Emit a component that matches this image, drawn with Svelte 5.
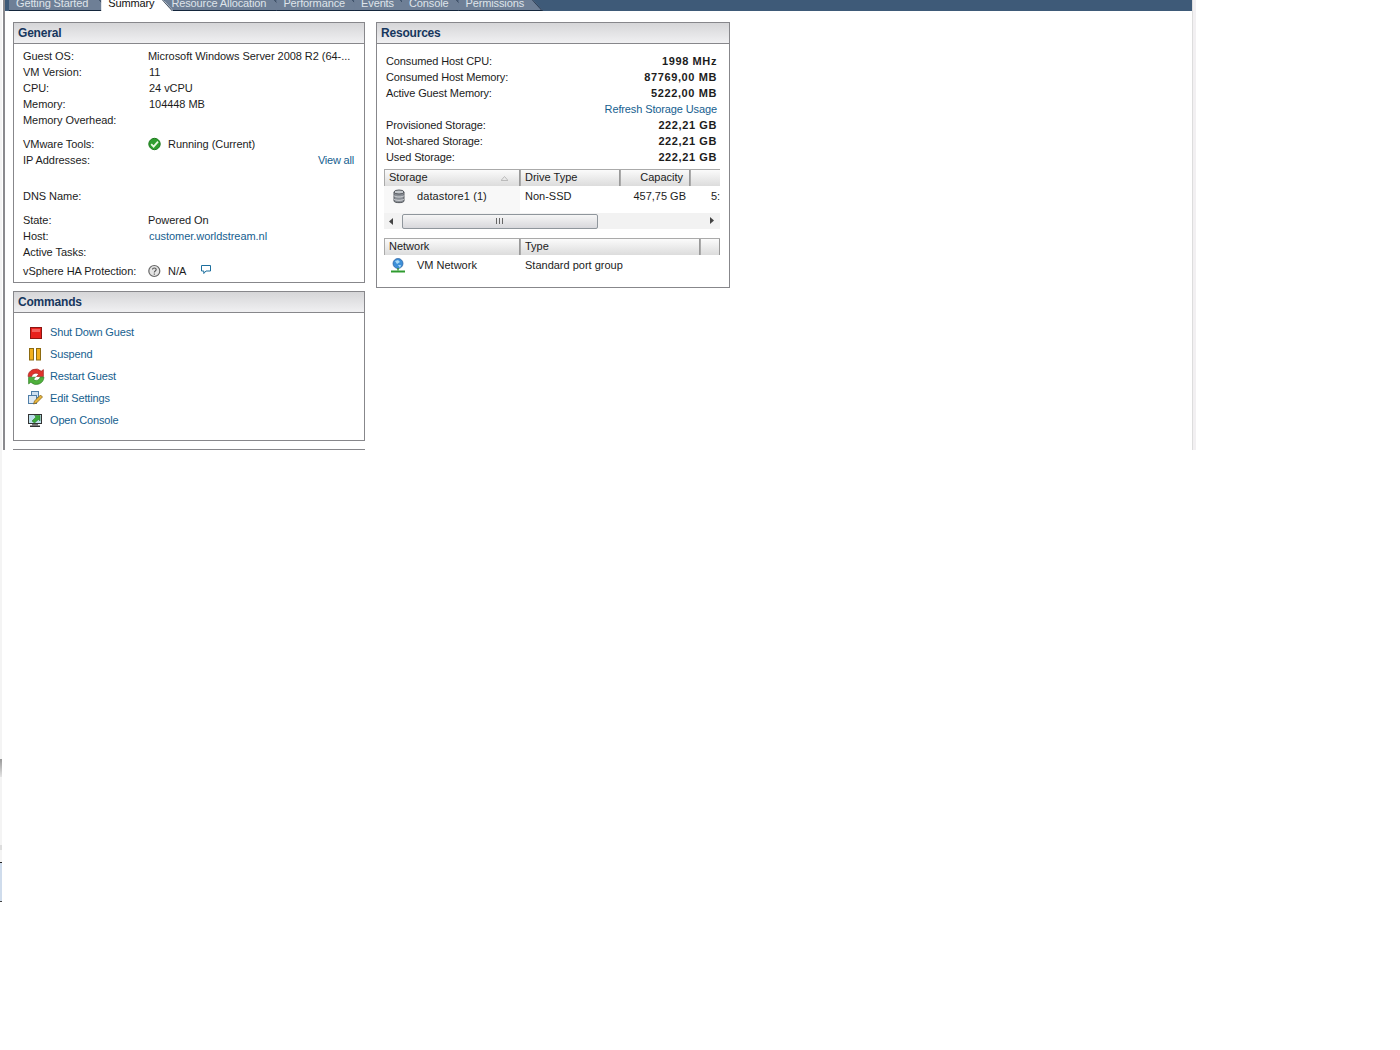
<script lang="ts">
  const tabs = ["Getting Started", "Summary", "Resource Allocation", "Performance", "Events", "Console", "Permissions"];

  const general1 = [
    ["Guest OS:", "Microsoft Windows Server 2008 R2 (64-..."],
    ["VM Version:", "11"],
    ["CPU:", "24 vCPU"],
    ["Memory:", "104448 MB"],
    ["Memory Overhead:", ""],
  ];

  const usage = [
    ["Consumed Host CPU:", "1998 MHz"],
    ["Consumed Host Memory:", "87769,00 MB"],
    ["Active Guest Memory:", "5222,00 MB"],
  ];
  const storage = [
    ["Provisioned Storage:", "222,21 GB"],
    ["Not-shared Storage:", "222,21 GB"],
    ["Used Storage:", "222,21 GB"],
  ];
  const commands = ["Shut Down Guest", "Suspend", "Restart Guest", "Edit Settings", "Open Console"];
</script>

<div class="page">
  <div class="edge-marks">
    <span class="mark one"></span>
    <span class="mark two"></span>
    <span class="mark three"></span>
  </div>
  <div class="window">
    <div class="tabbar">
      {#each tabs as tab, i}
        <div class="tab" class:active={i === 1}>{tab}</div>
      {/each}
    </div>
    <div class="columns">
      <div class="col-left">
        <section class="panel general">
          <h2>General</h2>
          <div class="body">
            {#each general1 as row, i}
              <div class="row"><span class="label">{row[0]}</span><span class="value" class:nudge={i > 0}>{row[1]}</span></div>
            {/each}
            <div class="row gap8">
              <span class="label">VMware Tools:</span>
              <span class="value withicon">
                <svg width="14" height="14" viewBox="0 0 14 14">
                  <circle cx="6.5" cy="7" r="5.7" fill="#2f9e2f" stroke="#1d7a1d" />
                  <path d="M3.2 7.2l2.4 2.5 4.4-5" fill="none" stroke="#e8f8e0" stroke-width="1.8" />
                </svg>
                Running (Current)
              </span>
            </div>
            <div class="row ip">
              <span class="label">IP Addresses:</span>
              <a class="viewall">View all</a>
            </div>
            <div class="row dns"><span class="label">DNS Name:</span></div>
            <div class="row gap8"><span class="label">State:</span><span class="value">Powered On</span></div>
            <div class="row"><span class="label">Host:</span><a class="value link nudge">customer.worldstream.nl</a></div>
            <div class="row"><span class="label">Active Tasks:</span></div>
            <div class="row ha">
              <span class="label">vSphere HA Protection:</span>
              <span class="value withicon">
                <svg width="14" height="14" viewBox="0 0 14 14">
                  <circle cx="6.3" cy="7" r="5.5" fill="#e4e4e4" stroke="#666" stroke-width="1.2" />
                  <path d="M4.5 5.6c0-2.2 3.7-2.2 3.7 0 0 1.4-1.9 1.4-1.9 2.8M6.3 9.4v1.4" fill="none" stroke="#555" stroke-width="1.1" />
                </svg>
                N/A
                <svg class="balloon" width="12" height="11" viewBox="0 0 12 11">
                  <path d="M1.5 1.5h9v5.5H6L3.8 9.5V7H1.5z" fill="none" stroke="#1d6f9e" />
                </svg>
              </span>
            </div>
          </div>
        </section>

        <section class="panel commands">
          <h2>Commands</h2>
          <div class="cmd-body">
            {#each commands as cmd, i}
              <div class="cmd">
                <span class="cmd-icon">
                  {#if i === 0}
                    <svg width="16" height="16" viewBox="0 0 16 16">
                      <rect x="3.5" y="3.5" width="11" height="11" fill="#e8201c" stroke="#8c1512" />
                      <rect x="5" y="5" width="8" height="3" fill="#f4605c" />
                    </svg>
                  {:else if i === 1}
                    <svg width="16" height="16" viewBox="0 0 16 16">
                      <rect x="2.5" y="2.5" width="4" height="11.5" fill="#f2b01e" stroke="#8c6a10" />
                      <rect x="9.5" y="2.5" width="4" height="11.5" fill="#f2b01e" stroke="#8c6a10" />
                    </svg>
                  {:else if i === 2}
                    <svg width="18" height="17" viewBox="0 0 17 16">
                      <path d="M1 8a7.3 7.3 0 0 1 12.4-5L15.5 1.5V8H9l2-2A4 4 0 0 0 4.4 8z" fill="#e0332c" stroke="#9c1f1a" stroke-width=".6" />
                      <path d="M16 8.5a7.3 7.3 0 0 1-12.4 5L1.5 15V8.7H8l-2 2a4 4 0 0 0 6.6-2.2z" fill="#4fb03c" stroke="#2a7a20" stroke-width=".6" />
                    </svg>
                  {:else if i === 3}
                    <svg width="16" height="16" viewBox="0 0 16 16">
                      <rect x="4.5" y="1.5" width="7" height="6" fill="#cfe0f0" stroke="#4f7ea8" />
                      <rect x="1.5" y="5.5" width="8" height="8" fill="#dde9f4" stroke="#4f7ea8" />
                      <path d="M6.5 14l1-3 6-6 2 2-6 6z" fill="#e8b43a" stroke="#7a5a18" stroke-width=".7" />
                    </svg>
                  {:else}
                    <svg width="16" height="16" viewBox="0 0 16 16">
                      <rect x="1.5" y="2.5" width="13" height="9" fill="#bfe0ec" stroke="#333" />
                      <rect x="5" y="12" width="6" height="1.5" fill="#777" />
                      <rect x="3" y="13.5" width="10" height="1.5" fill="#333" />
                      <path d="M5 9l4-4-1.5-1.5H13V9l-1.5-1.5-4 3.5z" fill="#3aa83a" stroke="#1f6f1f" stroke-width=".5" />
                    </svg>
                  {/if}
                </span>
                <a class="link">{cmd}</a>
              </div>
            {/each}
          </div>
        </section>

        <div class="next-panel"></div>
      </div>

      <section class="panel resources">
        <h2>Resources</h2>
        <div class="res-body">
          {#each usage as row}
            <div class="res-row"><span>{row[0]}</span><b>{row[1]}</b></div>
          {/each}
          <div class="res-row refresh"><a class="link">Refresh Storage Usage</a></div>
          {#each storage as row}
            <div class="res-row"><span>{row[0]}</span><b>{row[1]}</b></div>
          {/each}

          <div class="grid">
            <div class="ghead">
              <div class="th c1">Storage
                <svg class="sort" width="7" height="5" viewBox="0 0 7 5"><path d="M0 4.5h7M0 4.5L3.5 .5 7 4.5" fill="none" stroke="#bbb" /></svg>
              </div>
              <div class="th c2">Drive Type</div>
              <div class="th c3">Capacity</div>
              <div class="th c4"></div>
            </div>
            <div class="gbody">
              <div class="td c1 name">
                <svg width="14" height="15" viewBox="0 0 14 15">
                  <path d="M2 3v9c0 2.2 10 2.2 10 0V3z" fill="#8a8f96" stroke="#55595e" />
                  <ellipse cx="7" cy="3" rx="5" ry="2" fill="#c4c8cc" stroke="#55595e" />
                  <path d="M2 6.5c0 2 10 2 10 0M2 9.8c0 2 10 2 10 0" fill="none" stroke="#d8dadc" />
                </svg>
                datastore1 (1)
              </div>
              <div class="td c2">Non-SSD</div>
              <div class="td c3 num">457,75 GB</div>
              <div class="td c4 cut">5:</div>
            </div>
            <div class="scroll">
              <svg width="5" height="7" viewBox="0 0 5 7"><path d="M4 0v7L0 3.5z" fill="#444" /></svg>
              <div class="thumb"><span class="grip"></span></div>
              <svg class="right" width="5" height="7" viewBox="0 0 5 7"><path d="M1 0v7l4-3.5z" fill="#444" /></svg>
            </div>
          </div>

          <div class="grid net">
            <div class="ghead">
              <div class="th n1">Network</div>
              <div class="th n2">Type</div>
              <div class="th n3"></div>
            </div>
            <div class="gbody">
              <div class="td n1 name">
                <svg width="16" height="15" viewBox="0 0 16 15">
                  <circle cx="8" cy="5.5" r="5" fill="#3d8fd8" stroke="#2a5f9e" stroke-width=".7" />
                  <path d="M5 3l3-1 2 2-3 2zM8 7l3 0-1 3z" fill="#a8d8f4" />
                  <path d="M8 10v2.5" stroke="#2e8b2e" stroke-width="1.4" />
                  <path d="M1 13.5h14" stroke="#2e9b2e" stroke-width="2" />
                </svg>
                VM Network
              </div>
              <div class="td n2">Standard port group</div>
            </div>
          </div>
        </div>
      </section>
    </div>
  </div>
</div>

<style>
  :global(body) {
    background: #fff;
  }
  .page {
    position: relative;
    width: 1400px;
    height: 1050px;
    font-family: "Liberation Sans", Arial, sans-serif;
    font-size: 11px;
    color: #1c1c1c;
    overflow: hidden;
  }
  .edge-marks {
    position: absolute;
    left: 0;
    top: 0;
    width: 2px;
    height: 902px;
    background: #f4f4f4;
  }
  .mark {
    position: absolute;
    left: 0;
    width: 2px;
  }
  .mark.one {
    top: 759px;
    height: 18px;
    background: linear-gradient(#999, #e4e4e4);
  }
  .mark.two {
    top: 845px;
    height: 5px;
    background: #ddd;
  }
  .mark.three {
    top: 862px;
    height: 40px;
    background: #cfdcec;
    border-top: 1px solid #222;
    border-bottom: 1px solid #444;
    box-sizing: border-box;
  }
  .window {
    height: 450px;
    margin-left: 3px;
    border-left: 2px solid #8a8a8e;
    border-right: 1px solid #ddd;
    box-shadow: 3px 0 0 #f2f0f2;
    box-sizing: content-box;
    width: 1187px;
  }
  .tabbar {
    display: flex;
    align-items: flex-end;
    height: 11px;
    overflow: hidden;
    background: #3e5a78;
    padding-left: 4px;
  }
  .tab {
    position: relative;
    flex: none;
    height: 11px;
    line-height: 7px;
    padding: 0 19px 0 7px;
    margin-right: -9px;
    color: #dfe4ea;
    background: #6e7f96;
    border-bottom: 1px solid #14263c;
    box-sizing: border-box;
    white-space: nowrap;
    clip-path: polygon(0 0, calc(100% - 10px) 0, 100% 100%, 0 100%);
    letter-spacing: -0.12px;
  }
  .tab:first-child {
    padding-right: 22px;
  }
  .tab:nth-child(4) {
    padding-right: 18px;
  }
  .tab:nth-child(5) {
    padding-right: 17px;
  }
  .tab::after {
    content: "";
    position: absolute;
    right: 5px;
    top: 0;
    width: 1px;
    height: 11px;
    background: #1f3046;
    transform: skewX(42deg);
  }
  .tab.active {
    background: #fff;
    color: #111;
    border-bottom: 0;
    z-index: 1;
  }
  .columns {
    display: flex;
    align-items: flex-start;
    gap: 11px;
    padding: 11px 0 0 8px;
  }
  .col-left {
    display: flex;
    flex-direction: column;
    width: 352px;
    gap: 8px;
  }
  .panel {
    border: 1px solid #87878b;
    box-sizing: border-box;
    background: #fff;
  }
  h2 {
    margin: 0;
    height: 21px;
    line-height: 20px;
    padding-left: 4px;
    font-size: 12px;
    font-weight: bold;
    letter-spacing: -0.2px;
    color: #17375e;
    background: linear-gradient(#d6d6d8, #f0f0f2);
    border-bottom: 1px solid #87878b;
    box-sizing: border-box;
  }
  .general {
    height: 261px;
  }
  .body {
    padding: 4px 9px 0;
  }
  .row {
    display: flex;
    height: 16px;
    line-height: 16px;
    position: relative;
    letter-spacing: -0.05px;
  }
  .label {
    width: 125px;
    flex: none;
    white-space: nowrap;
  }
  .value {
    white-space: nowrap;
  }
  .nudge {
    margin-left: 1px;
  }
  .gap8 {
    margin-top: 8px;
  }
  .withicon {
    display: flex;
    align-items: center;
    gap: 6px;
  }
  .ip {
    justify-content: space-between;
    padding-right: 1px;
  }
  .viewall {
    letter-spacing: -0.2px;
  }
  .dns {
    margin-top: 20px;
  }
  .ha {
    margin-top: 2px;
    height: 18px;
    line-height: 18px;
  }
  .balloon {
    margin: -4px 0 0 8px;
  }
  .link,
  .viewall {
    color: #16608f;
  }
  .commands {
    height: 150px;
  }
  .cmd-body {
    padding: 8px 0 0 13px;
  }
  .cmd {
    display: flex;
    align-items: center;
    height: 22px;
    letter-spacing: -0.15px;
  }
  .cmd-icon {
    width: 23px;
    height: 16px;
    display: flex;
    align-items: center;
    flex: none;
  }
  .next-panel {
    height: 2px;
    border-top: 1px solid #87878b;
    background: #fff;
  }
  .resources {
    width: 354px;
    height: 266px;
  }
  .res-body {
    padding: 9px 0 0 7px;
  }
  .res-row {
    display: flex;
    justify-content: space-between;
    height: 16px;
    line-height: 16px;
    padding: 0 12px 0 2px;
    letter-spacing: -0.12px;
    white-space: nowrap;
  }
  .res-row b {
    letter-spacing: 0.6px;
  }
  .refresh {
    justify-content: flex-end;
  }
  .grid {
    width: 336px;
    margin-top: 4px;
  }
  .grid.net {
    margin-top: 9px;
  }
  .ghead {
    display: flex;
    height: 16px;
    background: linear-gradient(#fbfbfb, #dcdcdc);
    border-top: 1px solid #aaa;
  }
  .th {
    box-sizing: border-box;
    line-height: 15px;
    padding-left: 4px;
    border-left: 1px solid #aaa;
    border-right: 1px solid #999;
    position: relative;
  }
  .c1 {
    width: 136px;
  }
  .c2 {
    width: 100px;
  }
  .c3 {
    width: 70px;
    text-align: right;
    padding-right: 6px;
  }
  .c4 {
    width: 30px;
  }
  .th.c4 {
    border-right: 0;
  }
  .n1 {
    width: 136px;
  }
  .n2 {
    width: 180px;
  }
  .n3 {
    width: 20px;
  }
  .sort {
    position: absolute;
    right: 11px;
    top: 6px;
  }
  .gbody {
    display: flex;
    height: 27px;
  }
  .td {
    box-sizing: border-box;
    line-height: 20px;
    padding-left: 5px;
    white-space: nowrap;
    overflow: hidden;
  }
  .gbody .c1 {
    background: #f8f8f8;
  }
  .name {
    display: flex;
    align-items: center;
    height: 20px;
    gap: 11px;
    padding-left: 8px;
  }
  .gbody .c1.name {
    height: 27px;
    padding-bottom: 7px;
    letter-spacing: 0.1px;
  }
  .grid.net .name {
    gap: 11px;
    padding-left: 6px;
    height: 20px;
    background: #fff;
    letter-spacing: 0;
  }
  .num {
    padding-right: 4px;
  }
  .cut {
    padding-left: 21px;
  }
  .scroll {
    display: flex;
    align-items: center;
    height: 16px;
    padding-left: 5px;
    background: #f2f2f2;
    position: relative;
  }
  .thumb {
    width: 196px;
    height: 15px;
    margin-left: 8px;
    border: 1px solid #8f969c;
    border-radius: 2px;
    box-sizing: border-box;
    background: linear-gradient(#f6f6f6, #d8d8dc);
    display: flex;
    align-items: center;
    justify-content: center;
  }
  .grip {
    width: 8px;
    height: 6px;
    background: repeating-linear-gradient(90deg, #666 0 1px, transparent 1px 3px);
  }
  .right {
    position: absolute;
    right: 6px;
    top: 4px;
  }
</style>
